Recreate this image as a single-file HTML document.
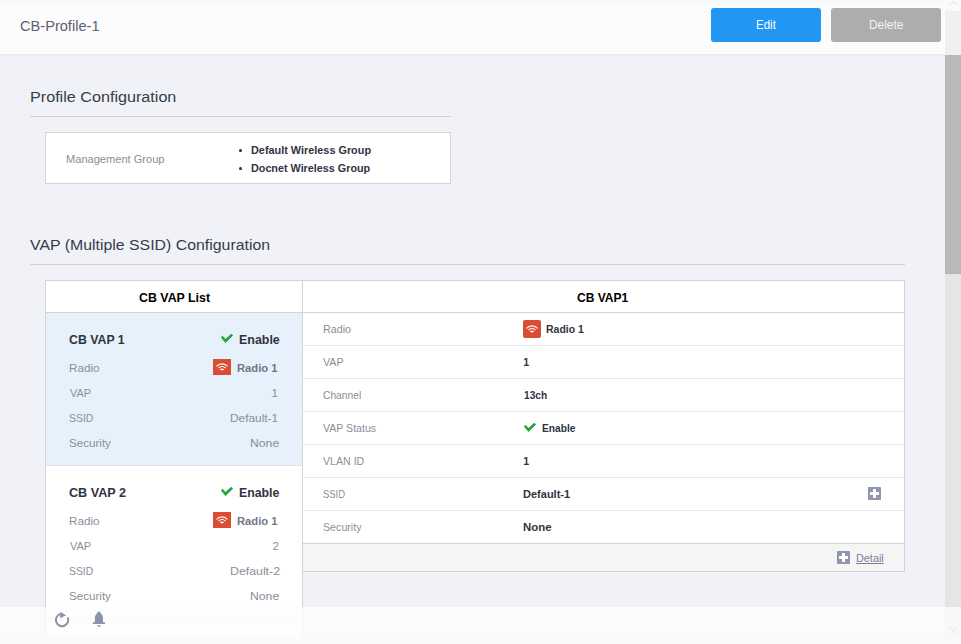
<!DOCTYPE html>
<html>
<head>
<meta charset="utf-8">
<title>CB-Profile-1</title>
<style>
*{box-sizing:border-box;margin:0;padding:0}
html,body{width:961px;height:644px;overflow:hidden;background:#f0f2f7;font-family:"Liberation Sans",sans-serif}
body{position:relative}
.t{position:absolute;white-space:nowrap;line-height:20px}
.a{position:absolute}
#hdr{position:absolute;left:0;top:0;width:961px;height:55px;background:linear-gradient(#f7f7f7 0,#fcfcfc 4px);border-bottom:1px solid #e9ebf0;z-index:5}
.btn{position:absolute;top:8px;width:110px;height:34px;border-radius:3px}
.row{position:absolute;left:303px;width:601px;height:33px;border-bottom:1px solid #e1e7ed;background:#fff}
.plus{position:absolute;width:13px;height:13px;background:#9096ad;border-radius:1px}
.plus:before{content:"";position:absolute;left:2px;top:5.3px;width:9px;height:2.4px;background:#fff}
.plus:after{content:"";position:absolute;left:5.3px;top:2px;width:2.4px;height:9px;background:#fff}
#ftr{position:absolute;left:0;top:607px;width:961px;height:37px;background:rgba(252,252,252,.8);z-index:6}
</style>
</head>
<body>

<!-- scrollbar -->
<div class="a" style="left:945px;top:0;width:16px;height:644px;background:#e5e5e5"></div>
<div class="a" style="left:945px;top:17px;width:16px;height:257px;background:#b9b9b9;border-left:1px solid #b3b3b3;border-bottom:1px solid #b4b4b4"></div>

<!-- section headings -->
<div class="a" style="left:30px;top:116px;width:421px;height:1px;background:#cfd0d3"></div>
<div class="a" style="left:45px;top:132px;width:406px;height:52px;background:#fff;border:1px solid #d4d4d5"></div>
<div class="a" style="left:239.3px;top:148.5px;width:3px;height:3.6px;border-radius:50%;background:#30343f"></div>
<div class="a" style="left:239.3px;top:166.5px;width:3px;height:3.6px;border-radius:50%;background:#30343f"></div>
<div class="a" style="left:30px;top:264px;width:875px;height:1px;background:#cfd0d3"></div>

<!-- table -->
<div class="a" style="left:45px;top:280px;width:860px;height:292px;background:#fff;border:1px solid #d4d4d5"></div>
<div class="a" style="left:45px;top:280px;width:258px;height:357px;background:#fff;border:1px solid #d4d4d5;border-bottom:none"></div>
<div class="a" style="left:46px;top:312px;width:858px;height:1px;background:#d4d4d5"></div>
<div class="a" style="left:46px;top:313px;width:256px;height:153px;background:#e7f1fb;border-bottom:1px solid #dbe5ee"></div>
<div class="a" style="left:46px;top:618px;width:256px;height:1px;background:#e3e8ee"></div>

<div class="row" style="top:313px"></div>
<div class="row" style="top:346px"></div>
<div class="row" style="top:379px"></div>
<div class="row" style="top:412px"></div>
<div class="row" style="top:445px"></div>
<div class="row" style="top:478px"></div>
<div class="row" style="top:511px;border-bottom:1px solid #d4d4d5"></div>
<div class="a" style="left:303px;top:544px;width:601px;height:27px;background:#f5f5f5"></div>
<svg style="position:absolute;left:220px;top:333px" width="14" height="11" viewBox="0 0 14 11"><path d="M0.94 4.6 L2.5 2.7 L5.47 6.0 L11.25 0.84 L13.1 2.4 L5.47 10.06 Z" fill="#21a637"/></svg>
<svg style="position:absolute;left:220px;top:486px" width="14" height="11" viewBox="0 0 14 11"><path d="M0.94 4.6 L2.5 2.7 L5.47 6.0 L11.25 0.84 L13.1 2.4 L5.47 10.06 Z" fill="#21a637"/></svg>
<svg style="position:absolute;left:523px;top:422px" width="14" height="11" viewBox="0 0 14 11"><path d="M0.94 4.6 L2.5 2.7 L5.47 6.0 L11.25 0.84 L13.1 2.4 L5.47 10.06 Z" fill="#21a637"/></svg>
<svg style="position:absolute;left:213px;top:359px" width="18" height="16" viewBox="0 0 18 16"><rect width="18" height="16" rx="0" fill="#d94d34"/><g fill="none" stroke="#fff" stroke-width="1.2"><path d="M3.58 7.32 A7.3 7.3 0 0 1 14.42 7.32"/><path d="M5.51 9.06 A4.7 4.7 0 0 1 12.49 9.06"/></g><g fill="none" stroke="#fff" stroke-width="1.5"><path d="M7.59 10.93 A1.9 1.9 0 0 1 10.41 10.93"/></g></svg>
<svg style="position:absolute;left:213px;top:512px" width="18" height="16" viewBox="0 0 18 16"><rect width="18" height="16" rx="0" fill="#d94d34"/><g fill="none" stroke="#fff" stroke-width="1.2"><path d="M3.58 7.32 A7.3 7.3 0 0 1 14.42 7.32"/><path d="M5.51 9.06 A4.7 4.7 0 0 1 12.49 9.06"/></g><g fill="none" stroke="#fff" stroke-width="1.5"><path d="M7.59 10.93 A1.9 1.9 0 0 1 10.41 10.93"/></g></svg>
<svg style="position:absolute;left:523px;top:320px" width="18" height="18" viewBox="0 0 18 18"><rect width="18" height="18" rx="2" fill="#d94d34"/><g fill="none" stroke="#fff" stroke-width="1.2"><path d="M3.58 8.32 A7.3 7.3 0 0 1 14.42 8.32"/><path d="M5.51 10.06 A4.7 4.7 0 0 1 12.49 10.06"/></g><g fill="none" stroke="#fff" stroke-width="1.5"><path d="M7.59 11.93 A1.9 1.9 0 0 1 10.41 11.93"/></g></svg>
<div class="plus" style="left:868px;top:487px"></div>
<div class="plus" style="left:837px;top:551px"></div>
<div class="t" style="left:30.10px;top:87px;font-size:16px;font-weight:normal;color:#373c4a;transform-origin:0 15px;transform:scale(1.0095,0.94);">Profile Configuration</div>
<div class="t" style="left:66.02px;top:149px;font-size:10.8px;font-weight:normal;color:#8b8e98;transform-origin:0 14px;transform:scale(1.0252,1);">Management Group</div>
<div class="t" style="left:251.09px;top:140px;font-size:10.8px;font-weight:bold;color:#30343f;transform-origin:0 14px;transform:scale(1.0062,1);">Default Wireless Group</div>
<div class="t" style="left:251.00px;top:158px;font-size:10.8px;font-weight:bold;color:#30343f;transform-origin:0 14px;transform:scale(0.9988,1);">Docnet Wireless Group</div>
<div class="t" style="left:30.30px;top:235px;font-size:16px;font-weight:normal;color:#373c4a;transform-origin:0 15px;transform:scale(0.9914,0.94);">VAP (Multiple SSID) Configuration</div>
<div class="t" style="left:138.69px;top:288px;font-size:12.5px;font-weight:bold;color:#000;transform-origin:0 14px;transform:scale(0.9895,1);">CB VAP List</div>
<div class="t" style="left:576.99px;top:288px;font-size:12.5px;font-weight:bold;color:#000;transform-origin:0 14px;transform:scale(0.9625,1);">CB VAP1</div>
<div class="t" style="left:69.00px;top:330px;font-size:12.5px;font-weight:bold;color:#30343f;transform-origin:0 14px;transform:scale(0.9846,1);">CB VAP 1</div>
<div class="t" style="left:238.70px;top:330px;font-size:12.5px;font-weight:bold;color:#30343f;transform-origin:0 14px;transform:scale(0.9943,1);">Enable</div>
<div class="t" style="left:69.35px;top:358px;font-size:11.5px;font-weight:normal;color:#8b8e98;transform-origin:0 14px;transform:scale(1.0148,1);">Radio</div>
<div class="t" style="left:236.80px;top:358px;font-size:11.5px;font-weight:bold;color:#70758a;transform-origin:0 14px;transform:scale(0.9729,1);">Radio 1</div>
<div class="t" style="left:69.87px;top:383px;font-size:11.5px;font-weight:normal;color:#8b8e98;transform-origin:0 14px;transform:scale(0.9561,1);">VAP</div>
<div class="t" style="left:271.40px;top:383px;font-size:11.5px;font-weight:normal;color:#8b8e98;transform-origin:0 14px;transform:scale(1.0000,1);">1</div>
<div class="t" style="left:69.03px;top:408px;font-size:11.5px;font-weight:normal;color:#8b8e98;transform-origin:0 14px;transform:scale(0.9090,1);">SSID</div>
<div class="t" style="left:229.90px;top:408px;font-size:11.5px;font-weight:normal;color:#8b8e98;transform-origin:0 14px;transform:scale(1.0310,1);">Default-1</div>
<div class="t" style="left:68.94px;top:433px;font-size:11.5px;font-weight:normal;color:#8b8e98;transform-origin:0 14px;transform:scale(1.0088,1);">Security</div>
<div class="t" style="left:249.91px;top:433px;font-size:11.5px;font-weight:normal;color:#8b8e98;transform-origin:0 14px;transform:scale(1.0618,1);">None</div>
<div class="t" style="left:68.92px;top:483px;font-size:12.5px;font-weight:bold;color:#30343f;transform-origin:0 14px;transform:scale(1.0100,1);">CB VAP 2</div>
<div class="t" style="left:239.01px;top:483px;font-size:12.5px;font-weight:bold;color:#30343f;transform-origin:0 14px;transform:scale(0.9853,1);">Enable</div>
<div class="t" style="left:69.32px;top:511px;font-size:11.5px;font-weight:normal;color:#8b8e98;transform-origin:0 14px;transform:scale(1.0155,1);">Radio</div>
<div class="t" style="left:236.80px;top:511px;font-size:11.5px;font-weight:bold;color:#70758a;transform-origin:0 14px;transform:scale(0.9729,1);">Radio 1</div>
<div class="t" style="left:69.86px;top:536px;font-size:11.5px;font-weight:normal;color:#8b8e98;transform-origin:0 14px;transform:scale(0.9561,1);">VAP</div>
<div class="t" style="left:272.60px;top:536px;font-size:11.5px;font-weight:normal;color:#8b8e98;transform-origin:0 14px;transform:scale(1.0000,1);">2</div>
<div class="t" style="left:69.10px;top:561px;font-size:11.5px;font-weight:normal;color:#8b8e98;transform-origin:0 14px;transform:scale(0.8992,1);">SSID</div>
<div class="t" style="left:229.59px;top:561px;font-size:11.5px;font-weight:normal;color:#8b8e98;transform-origin:0 14px;transform:scale(1.0714,1);">Default-2</div>
<div class="t" style="left:68.91px;top:586px;font-size:11.5px;font-weight:normal;color:#8b8e98;transform-origin:0 14px;transform:scale(1.0093,1);">Security</div>
<div class="t" style="left:249.91px;top:586px;font-size:11.5px;font-weight:normal;color:#8b8e98;transform-origin:0 14px;transform:scale(1.0621,1);">None</div>
<div class="t" style="left:323.00px;top:319px;font-size:10.6px;font-weight:normal;color:#8b8e98;transform-origin:0 14px;transform:scale(1.0148,1);">Radio</div>
<div class="t" style="left:322.95px;top:352px;font-size:10.6px;font-weight:normal;color:#8b8e98;transform-origin:0 14px;transform:scale(1.0096,1);">VAP</div>
<div class="t" style="left:323.23px;top:385px;font-size:10.6px;font-weight:normal;color:#8b8e98;transform-origin:0 14px;transform:scale(0.9686,1);">Channel</div>
<div class="t" style="left:323.02px;top:418px;font-size:10.6px;font-weight:normal;color:#8b8e98;transform-origin:0 14px;transform:scale(0.9974,1);">VAP Status</div>
<div class="t" style="left:322.51px;top:451px;font-size:10.6px;font-weight:normal;color:#8b8e98;transform-origin:0 14px;transform:scale(1.0017,1);">VLAN ID</div>
<div class="t" style="left:323.15px;top:484px;font-size:10.6px;font-weight:normal;color:#8b8e98;transform-origin:0 14px;transform:scale(0.8921,1);">SSID</div>
<div class="t" style="left:323.47px;top:517px;font-size:10.6px;font-weight:normal;color:#8b8e98;transform-origin:0 14px;transform:scale(1.0072,1);">Security</div>
<div class="t" style="left:546.34px;top:319px;font-size:10.6px;font-weight:bold;color:#30343f;transform-origin:0 14px;transform:scale(0.9896,1);">Radio 1</div>
<div class="t" style="left:523.30px;top:352px;font-size:10.6px;font-weight:bold;color:#30343f;transform-origin:0 14px;transform:scale(1.0000,1);">1</div>
<div class="t" style="left:524.06px;top:385px;font-size:10.6px;font-weight:bold;color:#30343f;transform-origin:0 14px;transform:scale(0.9580,1);">13ch</div>
<div class="t" style="left:541.70px;top:418px;font-size:10.6px;font-weight:bold;color:#30343f;transform-origin:0 14px;transform:scale(0.9615,1);">Enable</div>
<div class="t" style="left:523.30px;top:451px;font-size:10.6px;font-weight:bold;color:#30343f;transform-origin:0 14px;transform:scale(1.0000,1);">1</div>
<div class="t" style="left:523.04px;top:484px;font-size:10.6px;font-weight:bold;color:#30343f;transform-origin:0 14px;transform:scale(1.0400,1);">Default-1</div>
<div class="t" style="left:523.08px;top:517px;font-size:10.6px;font-weight:bold;color:#30343f;transform-origin:0 14px;transform:scale(1.0755,1);">None</div>
<div class="t" style="left:855.96px;top:548px;font-size:11.5px;font-weight:normal;color:#7b8097;transform-origin:0 14px;transform:scale(0.9433,1);text-decoration:underline;text-underline-offset:1px;">Detail</div>
<!-- header -->
<div id="hdr">
  <div class="btn" style="left:711px;background:#2196f3"></div>
  <div class="btn" style="left:831px;background:#adadad"></div>
  <div class="t" style="left:20.02px;top:16px;font-size:14.5px;font-weight:normal;color:#5c6170;transform-origin:0 15px;transform:scale(1.0070,1);">CB-Profile-1</div>
<div class="t" style="left:755.56px;top:15px;font-size:12.3px;font-weight:normal;color:#fff;transform-origin:0 14px;transform:scale(0.9387,1);">Edit</div>
<div class="t" style="left:868.53px;top:15px;font-size:12.3px;font-weight:normal;color:#f3f3f3;transform-origin:0 14px;transform:scale(0.9681,1);">Delete</div>
</div>
<div class="a" style="left:945px;top:0;width:16px;height:11px;background:#fafafa;z-index:7">
 <svg width="16" height="11" style="position:absolute;left:0;top:0"><path d="M4.5 4.8 L8 1.4 L11.5 4.8" fill="none" stroke="#e2e2e2" stroke-width="1"/></svg>
</div>
<div class="a" style="left:945px;top:11px;width:16px;height:44px;background:#f0f0f0;z-index:7"></div>

<!-- footer overlay -->
<div id="ftr"></div>
<div class="a" style="left:0;top:637px;width:961px;height:7px;background:#f9fafc;z-index:7"></div>
<svg class="a" style="left:0;top:604px;z-index:8" width="961" height="40" viewBox="0 604 961 40">
 <path d="M60.6 613.9 A6.2 6.2 0 1 0 67.7 617.3" fill="none" stroke="#8d92a9" stroke-width="2"/>
 <path d="M60.2 612.0 L66.2 615.2 L60.2 618.3 Z" fill="#8d92a9"/>
 <path d="M98.9 611.4 C99.6 611.4 100.2 611.9 100.5 612.7 L102.5 615.4 C102.8 615.9 102.95 616.3 102.95 616.9 L103.0 622.2 L105 622.2 L105 624.1 L92.9 624.1 L92.9 622.2 L94.9 622.2 L94.95 616.9 C94.95 616.3 95.1 615.9 95.4 615.4 L97.4 612.7 C97.7 611.9 98.3 611.4 98.9 611.4 Z" fill="#8d92a9"/>
 <path d="M97.2 625.2 L100.8 625.2 L100.0 626.8 L98.1 626.8 Z" fill="#8d92a9"/>
 <path d="M949.3 627.2 L953 630.6 L956.7 627.2" fill="none" stroke="#e6e6e6" stroke-width="1"/>
</svg>
</body>
</html>
